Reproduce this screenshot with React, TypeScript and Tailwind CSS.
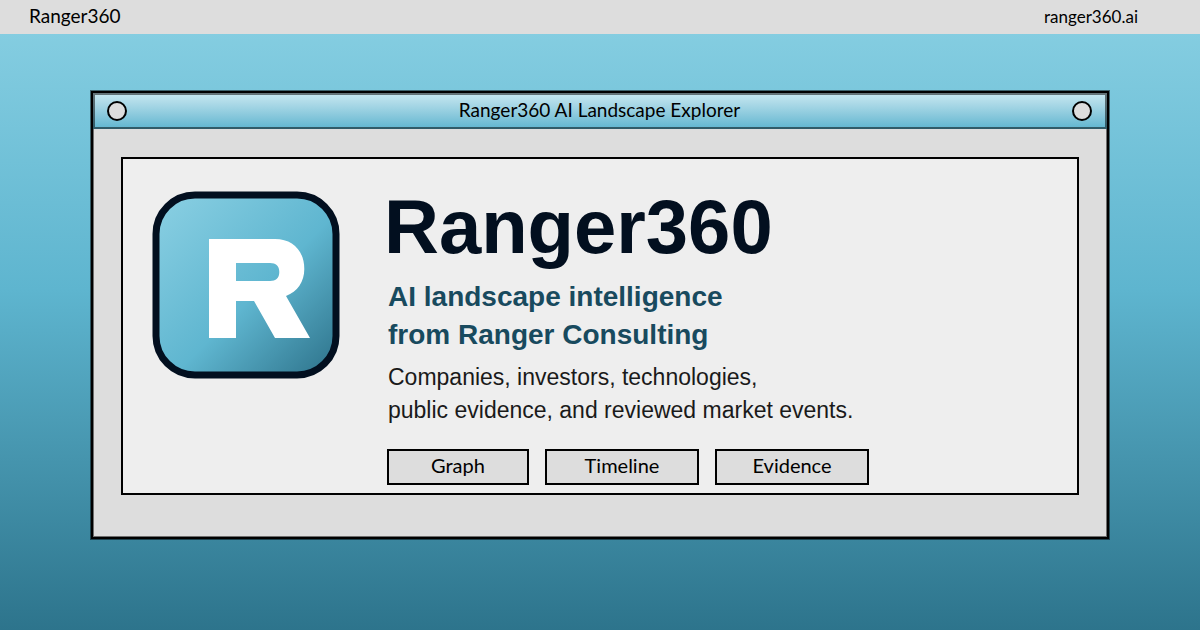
const actions = [
  { label: "Graph", width: "w-[142px]" },
  { label: "Timeline", width: "w-[154px]" },
  { label: "Evidence", width: "w-[154px]" },
];

function Logo() {
  return (
    <svg className="size-[188px] shrink-0" viewBox="0 0 188 188" role="img" aria-label="Ranger360">
      <defs>
        <linearGradient id="tile" x1="0" y1="0" x2="1" y2="1">
          <stop offset="0" stopColor="#8bd0e3" />
          <stop offset="0.55" stopColor="#5fb6d0" />
          <stop offset="1" stopColor="#2c7189" />
        </linearGradient>
      </defs>
      <rect x="4" y="4" width="180" height="180" rx="39" fill="url(#tile)" stroke="#020f1f" strokeWidth="7" />
      <path
        fill="#fff"
        fillRule="evenodd"
        d="M57 48H123C141 48 152.300 60 152.300 78C152.300 91 145.500 100.500 134 105L158 147H123L102 110H84V147H57ZM84 72V90H118C124 90 127.300 87 127.300 81C127.300 75 124 72 118 72Z"
      />
    </svg>
  );
}

function Knob() {
  return <span className="size-5 rounded-full border-2 border-black bg-[#ddd]" />;
}

export default function App() {
  return (
    <div className="flex min-h-screen flex-col bg-[linear-gradient(180deg,#89d0e3_0%,#5eb5cf_46%,#2d748c_100%)] font-['Lato','Liberation_Sans',sans-serif] text-black">
      <header className="flex h-[34px] items-center justify-between bg-[#ddd] pr-[62px] pl-[29px]">
        <span className="pb-0.5 text-[19px] leading-7">Ranger360</span>
        <a href="#home" className="text-[17px] leading-6">ranger360.ai</a>
      </header>
      <main className="px-[91px] pt-[57px] pb-[91px]">
        <section className="border-2 border-black bg-[#ddd] shadow-[0_0_0_1px_rgba(0,0,0,0.5),inset_0_0_0_1px_rgba(0,0,0,0.5)]">
          <div className="flex h-9 items-center justify-between bg-linear-to-b from-[#c9e8f1] to-[#5eb5cf] pr-[15px] pl-3.5 shadow-[inset_0_0_0_2px_rgba(0,0,0,0.5)]">
            <Knob />
            <span className="pb-0.5 text-[19px] leading-7">Ranger360 AI Landscape Explorer</span>
            <Knob />
          </div>
          <div className="px-7 pt-7 pb-[42px]">
            <div className="flex gap-12 border-2 border-black bg-[#eee] pt-8 pb-2 pl-[29px]">
              <Logo />
              <div className="font-['Liberation_Sans',sans-serif]">
                <h1 className="-ml-1 text-[76px] leading-[72px] font-bold text-[#020f1f]">Ranger360</h1>
                <p className="mt-[15px] text-[28px] leading-[38px] font-bold text-[#184a5e]">
                  AI landscape intelligence
                  <br />
                  from Ranger Consulting
                </p>
                <p className="mt-[7px] text-[23px] leading-[33px] text-[#1a1a1a]">
                  Companies, investors, technologies,
                  <br />
                  public evidence, and reviewed market events.
                </p>
                <div className="mt-[22px] -ml-px flex gap-4 font-['Lato','Liberation_Sans',sans-serif]">
                  {actions.map((action) => (
                    <button
                      key={action.label}
                      type="button"
                      className={`${action.width} h-9 border-2 border-black bg-[#ddd] pb-1 text-xl leading-7`}
                    >
                      {action.label}
                    </button>
                  ))}
                </div>
              </div>
            </div>
          </div>
        </section>
      </main>
    </div>
  );
}
